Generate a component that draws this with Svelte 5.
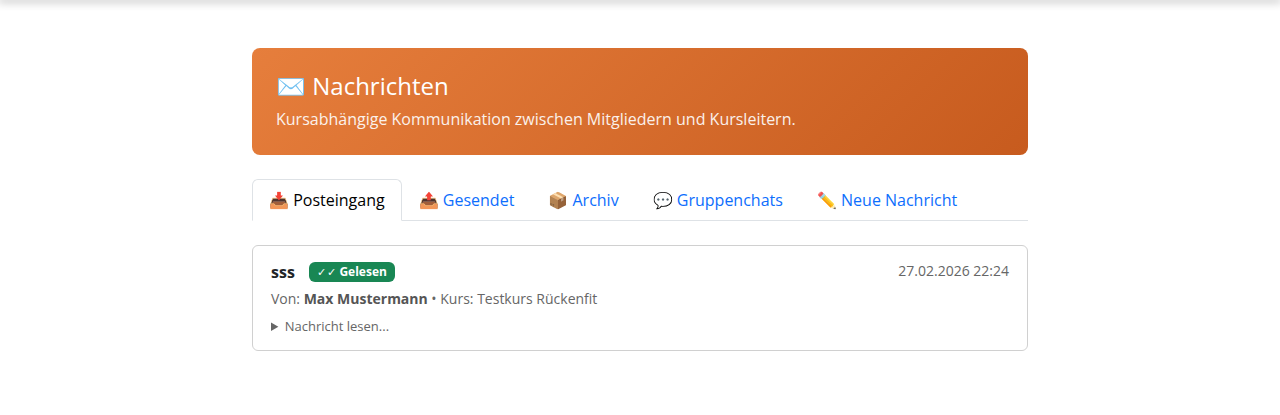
<script>
  const tabs = [
    { icon: "📥", label: "Posteingang", active: true },
    { icon: "📤", label: "Gesendet" },
    { icon: "📦", label: "Archiv" },
    { icon: "💬", label: "Gruppenchats" },
    { icon: "✏️", label: "Neue Nachricht" },
  ];
</script>

<div class="topShadow"></div>
<main class="page">
  <header class="hero">
    <h1>✉️ Nachrichten</h1>
    <p>Kursabhängige Kommunikation zwischen Mitgliedern und Kursleitern.</p>
  </header>

  <ul class="tabs">
    {#each tabs as tab}
      <li>
        <a href="#tab" class="tab" class:active={tab.active}>{tab.icon} {tab.label}</a>
      </li>
    {/each}
  </ul>

  <article class="message">
    <div class="head">
      <div class="subject">
        <strong>sss</strong>
        <span class="badge"><span class="checks">✓✓</span> Gelesen</span>
      </div>
      <span class="date">27.02.2026 22:24</span>
    </div>
    <div class="meta">Von: <strong>Max Mustermann</strong> • Kurs: Testkurs Rückenfit</div>
    <details>
      <summary>Nachricht lesen...</summary>
    </details>
  </article>
</main>

<style>
  :global(body) {
    background: #fff;
    font-family: "Open Sans", sans-serif;
    color: #212529;
  }
  .topShadow {
    height: 0;
    box-shadow: 0 0 8px 2px rgba(0, 0, 0, 0.3);
  }
  .page {
    width: 776px;
    margin: 0 auto;
    padding-top: 48px;
  }
  .hero {
    background: linear-gradient(135deg, #e67e3c, #c75b1e);
    border-radius: 8px;
    padding: 23px 24px 24px;
    color: #fff;
    height: 107px;
    box-sizing: border-box;
  }
  .hero h1 {
    margin: 0 0 7px;
    font-size: 24px;
    font-weight: 400;
    line-height: 29px;
  }
  .hero p {
    margin: 0;
    font-size: 16px;
    line-height: 24px;
    opacity: 0.9;
  }
  .tabs {
    display: flex;
    list-style: none;
    margin: 24px 0;
    padding: 0;
    border-bottom: 1px solid #dee2e6;
  }
  .tabs li {
    margin-bottom: -1px;
  }
  .tab {
    display: block;
    padding: 8px 16px;
    font-size: 16px;
    line-height: 24px;
    color: #0d6efd;
    text-decoration: none;
    border: 1px solid transparent;
    border-radius: 6px 6px 0 0;
  }
  .tab.active {
    color: #000;
    background: #fff;
    border-color: #dee2e6 #dee2e6 #fff;
  }
  .message {
    border: 1px solid #d0d0d0;
    border-radius: 6px;
    padding: 15px 18px 16px;
    height: 106px;
    box-sizing: border-box;
  }
  .head {
    display: flex;
    justify-content: space-between;
    align-items: flex-start;
  }
  .subject {
    display: flex;
    align-items: center;
    gap: 14px;
  }
  .subject strong {
    font-size: 16px;
    color: #212529;
  }
  .badge {
    background: #198754;
    color: #fff;
    font-size: 12px;
    font-weight: 700;
    line-height: 12px;
    padding: 4px 8px;
    border-radius: 6px;
  }
  .checks {
    font-weight: 400;
    font-size: 11px;
    letter-spacing: 0.7px;
  }
  .date {
    font-size: 14px;
    line-height: 18px;
    margin-top: 1px;
    color: #666;
  }
  .meta {
    margin-top: 5px;
    font-size: 14px;
    line-height: 21px;
    color: #666;
  }
  .meta strong {
    color: #555;
  }
  details {
    margin-top: 8px;
    font-size: 13px;
    line-height: 18px;
    color: #666;
  }
  summary {
    cursor: pointer;
  }
</style>
